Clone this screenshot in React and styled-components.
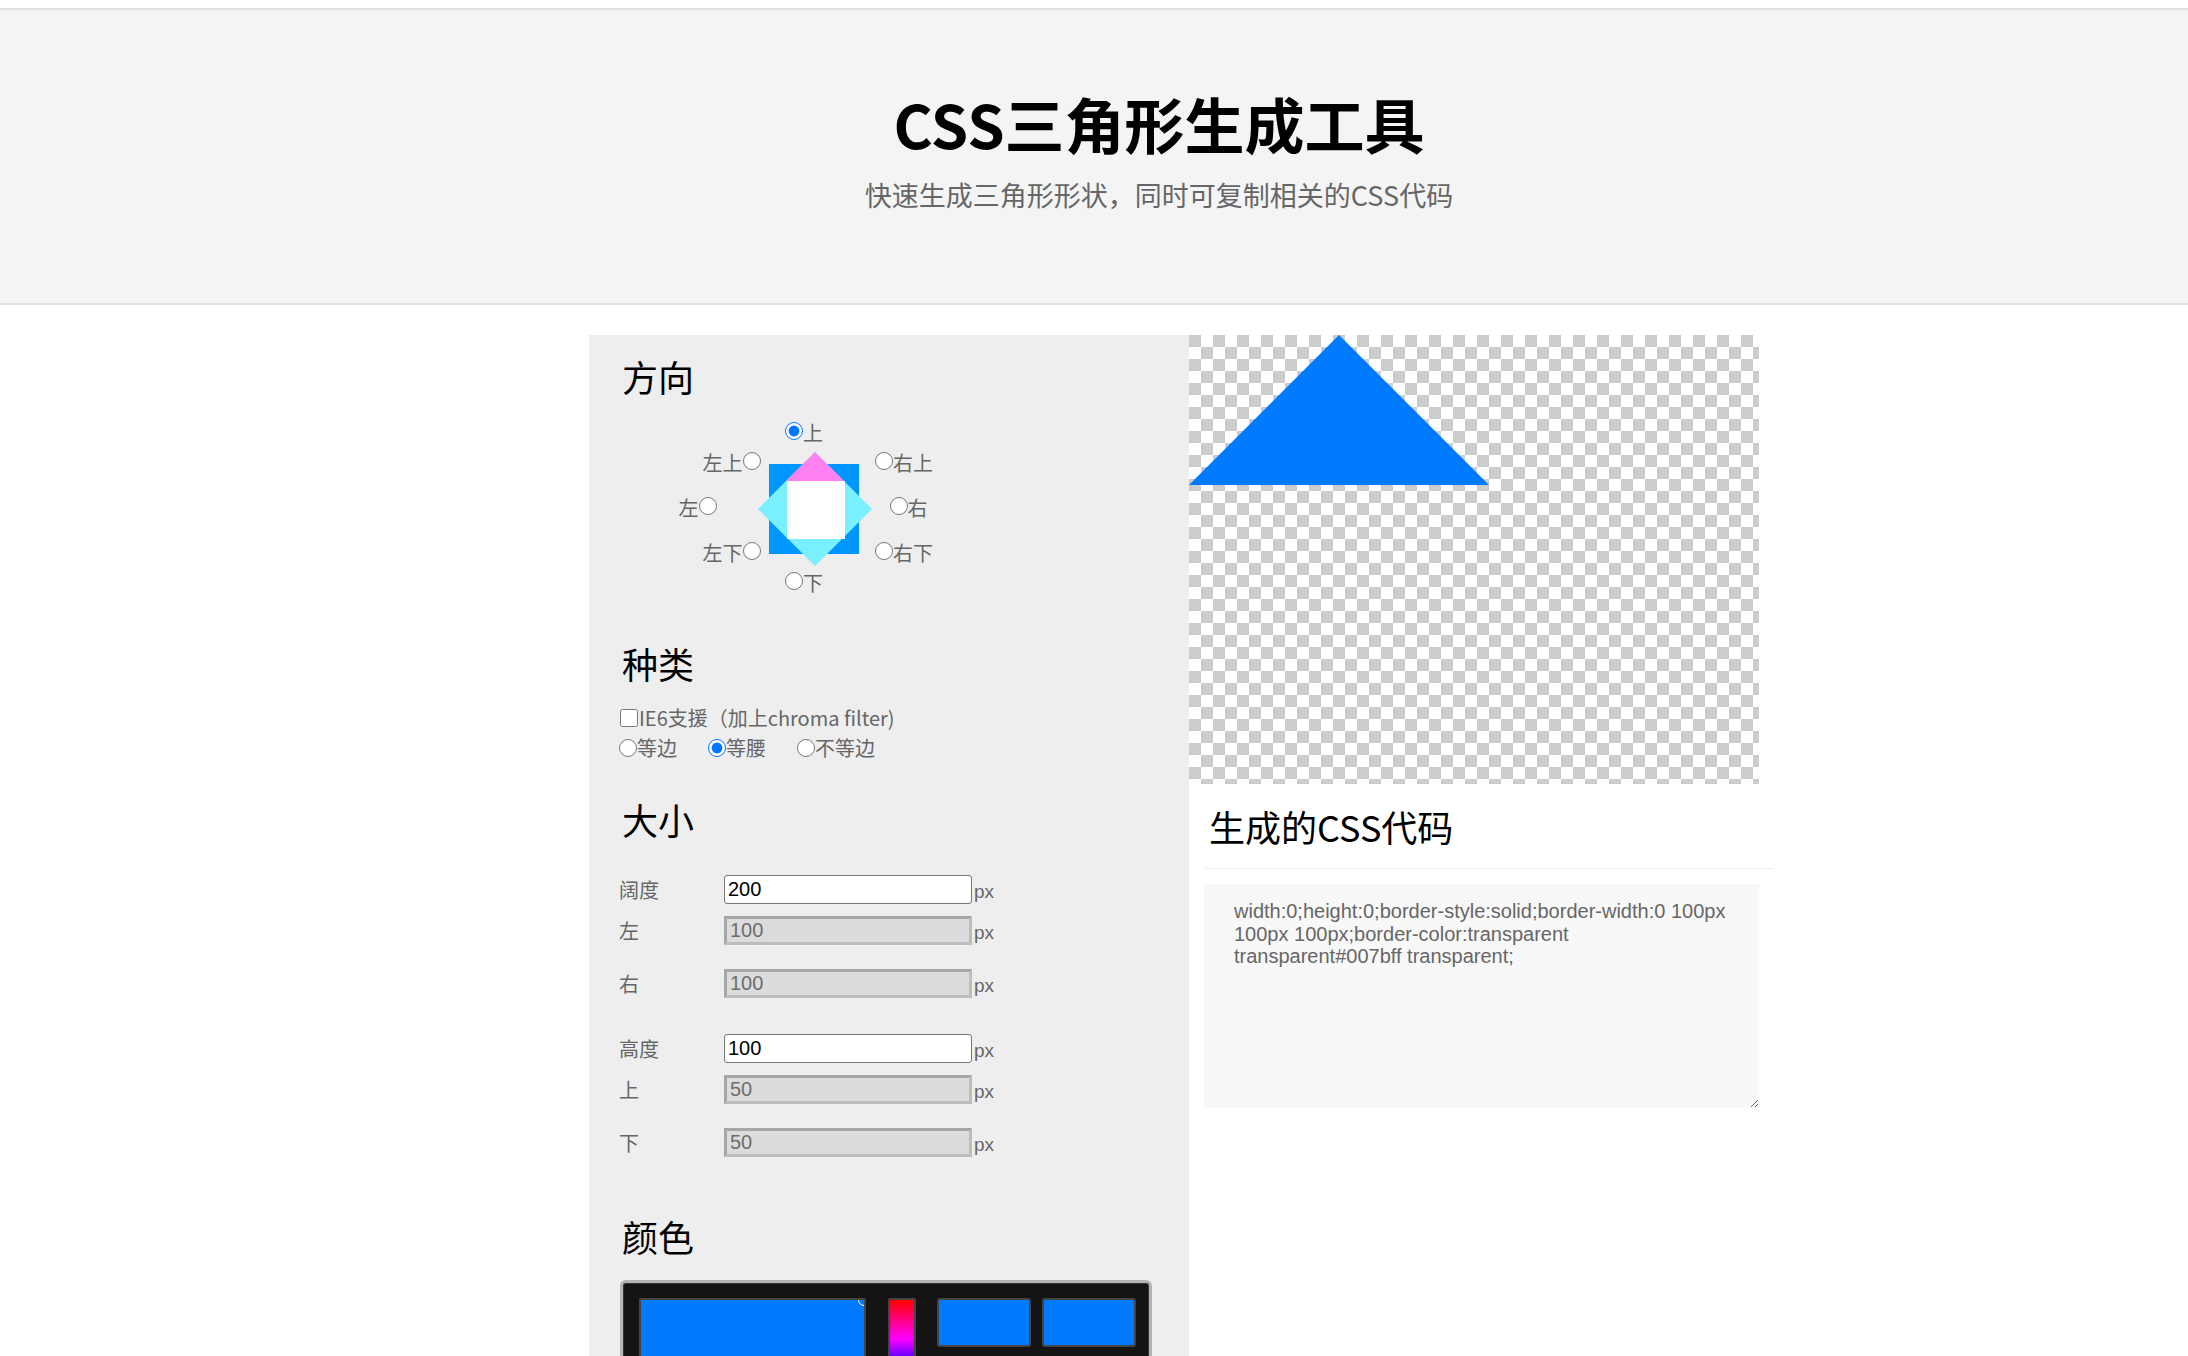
import styled, { createGlobalStyle } from "styled-components";

const GlobalStyle = createGlobalStyle`
  html, body {
    margin: 0;
    padding: 0;
    overflow: hidden;
    background: #fff;
  }
  body {
    font-family: "Noto Sans CJK SC", "Noto Sans", sans-serif;
  }
`;

/* Header */
const Page = styled.div`
  padding-top: 8px;
`;

const Header = styled.header`
  background: #f4f4f4;
  border-top: 2px solid #e2e2e2;
  border-bottom: 2px solid #e2e2e2;
  padding: 77px 0 92px 130px;
  text-align: center;
`;

const Title = styled.h1`
  margin: 0;
  font-size: 60px;
  line-height: 72px;
  font-weight: 700;
  color: #000;
`;

const Subtitle = styled.p`
  margin: 20px 0 0;
  font-size: 27px;
  line-height: 32px;
  color: #666;
`;

/* Main layout */
const Main = styled.main`
  padding-left: 130px;
  margin-top: 30px;
`;

const Container = styled.div`
  width: 1200px;
  margin: 0 auto;
  display: flex;
  align-items: flex-start;
`;

const LeftPanel = styled.section`
  width: 600px;
  box-sizing: border-box;
  margin-left: 30px;
  padding: 23px 30px 0;
  background: #eee;
  min-height: 1200px;
`;

const Heading = styled.h3`
  margin: ${(p) => p.$mt || 0}px 0 0;
  padding-left: 3px;
  font-size: 36px;
  line-height: 36px;
  font-weight: 400;
  color: #000;
`;

/* Direction picker */
const Compass = styled.div`
  position: relative;
  width: 320px;
  height: 190px;
  margin-top: 16px;
`;

const DirOption = styled.label`
  position: absolute;
  top: ${(p) => p.$top}px;
  ${(p) => (p.$left !== undefined ? `left: ${p.$left}px;` : `right: ${p.$right}px;`)}
  display: flex;
  align-items: center;
  height: 22px;
  font-size: 20px;
  line-height: 22px;
  color: #666;
  white-space: nowrap;
`;

const DirText = styled.span`
  padding-top: 3px;
`;

const Radio = styled.input.attrs({ type: "radio" })`
  width: 18px;
  height: 18px;
  margin: 0;
`;

const Check = styled.input.attrs({ type: "checkbox" })`
  width: 18px;
  height: 18px;
  margin: 0 1px 0 1px;
`;

const DirGraphic = styled.svg`
  position: absolute;
  left: 138px;
  top: 41px;
`;

/* Kind */
const OptionRow = styled.div`
  display: flex;
  align-items: center;
  margin-top: ${(p) => p.$mt}px;
  height: 22px;
  font-size: 20px;
  line-height: 22px;
  color: #666;
`;

const InlineOption = styled.label`
  display: flex;
  align-items: center;
  margin-right: 31px;
`;

/* Size */
const SizeRow = styled.div`
  display: flex;
  align-items: center;
  height: 29px;
  margin-top: ${(p) => p.$mt}px;
`;

const SizeLabel = styled.span`
  width: 105px;
  font-size: 20px;
  color: #666;
`;

const SizeInput = styled.input`
  box-sizing: border-box;
  width: 248px;
  height: 29px;
  margin: 0;
  padding: 0 3px;
  font-family: "Liberation Sans", Arial, sans-serif;
  font-size: 20px;
  color: ${(p) => (p.disabled ? "#6d6d6d" : "#000")};
  background: ${(p) => (p.disabled ? "#dcdcdc" : "#fff")};
  border: ${(p) => (p.disabled ? "3px solid" : "1px solid #767676")};
  border-color: ${(p) => (p.disabled ? "#a6a6a6 #bdbdbd #bdbdbd #a6a6a6" : "#767676")};
  border-radius: ${(p) => (p.disabled ? "0" : "3px")};
  outline: none;
`;

const Unit = styled.span`
  margin-left: 2px;
  font-family: "Liberation Sans", Arial, sans-serif;
  font-size: 19px;
  color: #666;
  padding-top: 4px;
`;

/* Colour picker */
const Picker = styled.div`
  margin: 26px 0 0 1px;
  width: 532px;
  box-sizing: border-box;
  display: flex;
  align-items: flex-start;
  padding: 15px 13px 0 16px;
  background: #141414;
  border: 3px solid #b4b4b4;
  border-radius: 6px;
  box-shadow: inset 0 0 0 1px #333;
`;

const SatBox = styled.div`
  position: relative;
  width: 227px;
  height: 180px;
  box-sizing: border-box;
  background: #007bff;
  border: 2px solid #444;
  border-radius: 2px;
  overflow: hidden;
`;

const Marker = styled.span`
  position: absolute;
  right: -6px;
  top: -6px;
  width: 10px;
  height: 10px;
  border: 1.5px solid #fff;
  border-radius: 50%;
`;

const HueBar = styled.div`
  width: 28px;
  height: 180px;
  box-sizing: border-box;
  margin-left: 22px;
  border: 2px solid #444;
  border-radius: 2px;
  background: linear-gradient(
    to bottom,
    #f00 0%,
    #f0f 22%,
    #00f 39%,
    #0ff 55%,
    #0f0 72%,
    #ff0 89%,
    #f00 100%
  );
`;

const Swatch = styled.div`
  width: 94px;
  height: 49px;
  box-sizing: border-box;
  margin-left: ${(p) => p.$ml}px;
  background: #007bff;
  border: 2px solid #444;
  border-radius: 3px;
`;

/* Right column */
const RightCol = styled.section`
  width: 570px;
`;

const Preview = styled.div`
  height: 449px;
  background: repeating-conic-gradient(#fff 0 25%, #ccc 0 50%) 0 0 / 24px 24px;
`;

const Triangle = styled.div`
  width: 0;
  height: 0;
  border-style: solid;
  border-width: 0 150px 150px 150px;
  border-color: transparent transparent #007bff transparent;
`;

const CodeTitle = styled.h3`
  width: 570px;
  box-sizing: border-box;
  margin: 24px 0 0 15px;
  padding: 0 0 24px 5px;
  font-size: 36px;
  line-height: 36px;
  font-weight: 400;
  color: #000;
  border-bottom: 1px solid #eee;
`;

const CodeBox = styled.textarea`
  display: block;
  width: 555px;
  height: 224px;
  box-sizing: border-box;
  margin: 15px 0 0 15px;
  padding: 16px 30px;
  border: none;
  outline: none;
  background: #f8f8f8;
  font-family: "Liberation Sans", Arial, sans-serif;
  font-size: 20px;
  line-height: 22.5px;
  color: #666;
`;

const directions = [
  { text: "上", left: 166, top: 10, checked: true },
  { text: "左上", right: 178.5, top: 40 },
  { text: "右上", left: 256, top: 40 },
  { text: "左", right: 222.5, top: 85 },
  { text: "右", left: 270.5, top: 85 },
  { text: "左下", right: 178.5, top: 130 },
  { text: "右下", left: 256, top: 130 },
  { text: "下", left: 166, top: 160 },
];

const sizeRows = [
  { label: "阔度", value: "200", mt: 38 },
  { label: "左", value: "100", mt: 12, disabled: true },
  { label: "右", value: "100", mt: 24, disabled: true },
  { label: "高度", value: "100", mt: 36 },
  { label: "上", value: "50", mt: 12, disabled: true },
  { label: "下", value: "50", mt: 24, disabled: true },
];

const cssCode =
  "width:0;height:0;border-style:solid;border-width:0 100px 100px 100px;border-color:transparent transparent#007bff transparent;";

function App() {
  return (
    <Page>
      <GlobalStyle />
      <Header>
        <Title>CSS三角形生成工具</Title>
        <Subtitle>快速生成三角形形状，同时可复制相关的CSS代码</Subtitle>
      </Header>

      <Main>
        <Container>
          <LeftPanel>
            <Heading>方向</Heading>
            <Compass>
              {directions.map((d) => (
                <DirOption key={d.text} $left={d.left} $right={d.right} $top={d.top}>
                  {d.right !== undefined && <DirText>{d.text}</DirText>}
                  <Radio name="dir" defaultChecked={d.checked} />
                  {d.left !== undefined && <DirText>{d.text}</DirText>}
                </DirOption>
              ))}
              <DirGraphic width="116" height="116" viewBox="0 0 116 116">
                <rect x="12" y="13" width="90" height="90" fill="#0096ff" />
                <polygon points="58,1 115,58 58,115 1,58" fill="#7af0ff" />
                <polygon points="58,1 87,30 29,30" fill="#ff80f0" />
                <rect x="30" y="30" width="58" height="58" fill="#fff" />
              </DirGraphic>
            </Compass>

            <Heading $mt={45}>种类</Heading>
            <OptionRow $mt={26}>
              <InlineOption>
                <Check />
                IE6支援（加上chroma filter)
              </InlineOption>
            </OptionRow>
            <OptionRow $mt={8}>
              <InlineOption>
                <Radio name="kind" />
                等边
              </InlineOption>
              <InlineOption>
                <Radio name="kind" defaultChecked />
                等腰
              </InlineOption>
              <InlineOption>
                <Radio name="kind" />
                不等边
              </InlineOption>
            </OptionRow>

            <Heading $mt={42}>大小</Heading>
            {sizeRows.map((r, i) => (
              <SizeRow key={i} $mt={r.mt}>
                <SizeLabel>{r.label}</SizeLabel>
                <SizeInput defaultValue={r.value} disabled={r.disabled} />
                <Unit>px</Unit>
              </SizeRow>
            ))}

            <Heading $mt={61}>颜色</Heading>
            <Picker>
              <SatBox>
                <Marker />
              </SatBox>
              <HueBar />
              <Swatch $ml={21} />
              <Swatch $ml={11} />
            </Picker>
          </LeftPanel>

          <RightCol>
            <Preview>
              <Triangle />
            </Preview>
            <CodeTitle>生成的CSS代码</CodeTitle>
            <CodeBox defaultValue={cssCode} />
          </RightCol>
        </Container>
      </Main>
    </Page>
  );
}

export default App;
